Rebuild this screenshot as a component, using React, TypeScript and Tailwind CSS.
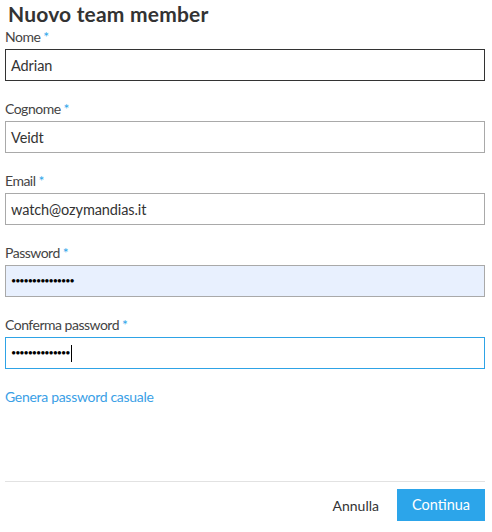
import React from 'react';

const fields = [
  { label: 'Nome', value: 'Adrian', kind: 'focus-dark' },
  { label: 'Cognome', value: 'Veidt', kind: 'plain' },
  { label: 'Email', value: 'watch@ozymandias.it', kind: 'plain' },
  { label: 'Password', value: '•••••••••••••••', kind: 'autofill' },
  { label: 'Conferma password', value: '••••••••••••••', kind: 'active' },
];

function Field({ label, value, kind }: { label: string; value: string; kind: string }) {
  const box =
    kind === 'focus-dark'
      ? 'border-[#333333] bg-white'
      : kind === 'autofill'
      ? 'border-[#a9a9a9] bg-[#e8f0fe]'
      : kind === 'active'
      ? 'border-[#2ea3e6] bg-white'
      : 'border-[#a9a9a9] bg-white';
  const isDots = value.startsWith('•');
  return (
    <div className="mb-[19px]">
      <div className="h-[18px] text-[14px] leading-[18px] tracking-[-0.5px] text-[#444]">
        {label}
        <span className="ml-[3px] text-[#2ea5ea]">*</span>
      </div>
      <div className={`mt-[3px] flex h-[32px] items-center border px-[5px] ${box}`}>
        {isDots ? (
          <span className="text-[9px] tracking-[-1.05px] text-black">{value}</span>
        ) : (
          <span className="pt-[1px] text-[14.5px] tracking-[-0.1px] text-[#333]">{value}</span>
        )}
        {kind === 'active' && <span className="ml-[2px] h-[17px] w-[1px] bg-black" />}
      </div>
    </div>
  );
}

export default function App() {
  return (
    <div className="w-[492px] h-[532px] bg-white px-[5px]" style={{ fontFamily: 'Lato, "Open Sans", sans-serif' }}>
      <h1 className="pl-[3px] text-[21px] font-bold leading-[27px] tracking-[0.2px] text-[#333]">
        Nuovo team member
      </h1>
      <div className="mt-[1px] w-[480px]">
        {fields.map(f => (
          <Field key={f.label} {...f} />
        ))}
      </div>
      <div className="mt-[4px] h-[18px] text-[14px] leading-[18px] tracking-[-0.3px] text-[#3aa0e6]">
        Genera password casuale
      </div>
      <div className="mt-[75px] h-[1px] w-[480px] bg-[#e2e2e2]" />
      <div className="mt-[7px] flex w-[480px] items-center justify-end">
        <button className="mr-[8px] h-[32px] px-[10px] text-[14px] text-[#333]">Annulla</button>
        <button className="h-[32px] w-[88px] bg-[#2ca5ea] text-[14.5px] text-white">Continua</button>
      </div>
    </div>
  );
}
